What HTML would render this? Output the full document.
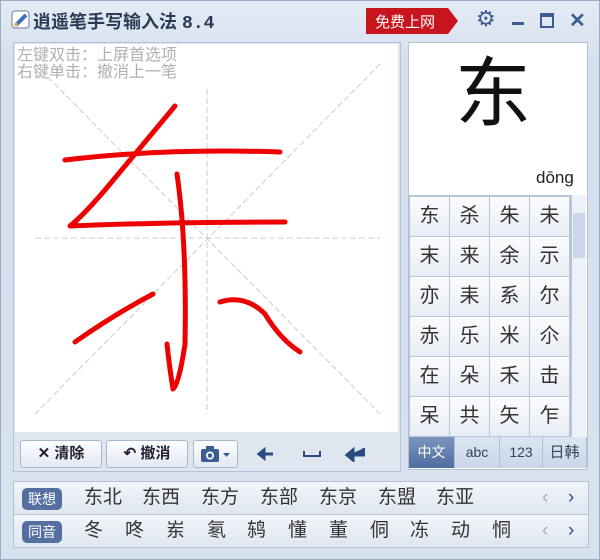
<html><head><style>
body{margin:0;width:600px;height:560px;background:#d3ddeb;font-family:"Liberation Sans","Noto Sans CJK SC",sans-serif;position:relative;overflow:hidden}
.a{position:absolute}
.win{left:0;top:0;width:598px;height:558px;border:1px solid #9aadc8;background:linear-gradient(#e4ebf5,#d6e0ed 60px,#d8e1ee)}
.btn{position:absolute;top:440px;height:26px;border:1px solid #a9b8cc;border-radius:3px;background:linear-gradient(#fdfdfe,#e3e9f2);font-size:15px;line-height:26px;color:#223;text-align:center;font-weight:bold}
.cell{position:absolute;width:39px;height:39px;background:linear-gradient(#fbfcfe,#e8edf4);border-right:1px solid #b7c5d8;border-bottom:1px solid #b7c5d8;font-size:20px;line-height:39px;text-align:center;color:#333}
.tab{position:absolute;top:437px;height:31px;font-size:14px;line-height:31px;text-align:center;color:#345;background:linear-gradient(#dce6f3,#c9d7ea);border-right:1px solid #aebfd6}
.row{position:absolute;left:13px;width:574px;height:32px;background:linear-gradient(#f2f5fa,#dfe6f0);border:1px solid #b3c2d6}
.lab{position:absolute;left:8px;top:6px;width:40px;height:22px;background:#5570a0;color:#fff;border-radius:5px;font-size:14px;line-height:22px;text-align:center}
.w{position:absolute;top:3px;font-size:19px;color:#333;line-height:26px}
</style></head><body>
<div class="a win"></div>
<svg class="a" style="left:11px;top:10px" width="20" height="20"><rect x="1" y="1" width="17" height="17" rx="3" fill="#fff" stroke="#6b7b96"/><path d="M5 15 L15 5" stroke="#3a6fc0" stroke-width="4"/><path d="M4 16 L6 13" stroke="#e8b040" stroke-width="3"/></svg>
<div class="a" style="left:33px;top:8px;font-size:18px;font-weight:bold;color:#2b3a55">逍遥笔手写输入法 <span style="font-family:'Liberation Mono';">8.4</span></div>
<div class="a" style="left:366px;top:8px;width:82px;height:26px;background:#c8141c"></div>
<div class="a" style="left:448px;top:8px;border-left:10px solid #c8141c;border-top:13px solid transparent;border-bottom:13px solid transparent"></div>
<div class="a" style="left:375px;top:11px;color:#fff;font-size:15px">免费上网</div>
<div class="a" style="left:476px;top:6px;font-size:22px;color:#3c5c94">⚙</div>
<div class="a" style="left:512px;top:22px;width:12px;height:3px;background:#3c5c94"></div>
<div class="a" style="left:540px;top:13px;width:10px;height:9px;border:2px solid #3c5c94;border-top-width:4px"></div>
<div class="a" style="left:569px;top:8px;font-size:20px;color:#3c5c94;font-weight:bold">✕</div>
<div class="a" style="left:13px;top:42px;width:386px;height:428px;border:1px solid #b3c2d6;background:#dfe6f0"></div>
<div class="a" style="left:15px;top:44px;width:383px;height:388px;background:#fff"></div>
<svg class="a" style="left:15px;top:44px" width="383" height="388">
<g stroke="#ccc" stroke-dasharray="6,3" fill="none"><path d="M20 194 H365"/><path d="M192 45 V370"/><path d="M20 20 L365 370"/><path d="M365 20 L20 370"/></g>
<g stroke="#ee0000" stroke-width="5" fill="none" stroke-linecap="round" stroke-linejoin="round">
<path d="M50 116 Q150 104 265 108"/>
<path d="M160 62 Q120 110 95 140 Q70 170 55 182 Q150 178 270 178"/>
<path d="M162 130 Q172 200 170 300 Q164 340 158 345 Q154 320 152 300"/>
<path d="M60 298 Q100 270 138 250"/>
<path d="M205 258 Q230 250 250 270 Q265 295 285 308"/>
</g></svg>
<div class="a" style="left:17px;top:47px;font-size:16px;line-height:17px;color:#b0b0b0">左键双击：上屏首选项<br>右键单击：撤消上一笔</div>
<div class="btn" style="left:20px;width:80px">✕ 清除</div>
<div class="btn" style="left:106px;width:80px">↶ 撤消</div>
<div class="btn" style="left:193px;width:43px"><svg width="36" height="20" style="margin-top:3px"><rect x="3" y="5" width="18" height="13" rx="2" fill="#3c5c94"/><rect x="8" y="2" width="8" height="4" fill="#3c5c94"/><circle cx="12" cy="11.5" r="4" fill="#fff"/><circle cx="12" cy="11.5" r="2.3" fill="#3c5c94"/><path d="M25 9 h7 l-3.5 4z" fill="#3c5c94"/></svg></div>
<svg class="a" style="left:255px;top:446px" width="110" height="16"><path d="M4 8 H18 M4 8 l5 -4 v8z" stroke="#2b4a80" stroke-width="3" fill="#2b4a80"/><path d="M49 5 v5 h16 v-5" stroke="#2b4a80" stroke-width="2" fill="none"/><path d="M109 2 v7 H94 M92 9 l6 -5 v10z" stroke="#2b4a80" stroke-width="3" fill="#2b4a80"/></svg>
<div class="a" style="left:408px;top:42px;width:178px;height:426px;border:1px solid #b3c2d6;background:#fff"></div>
<div class="a" style="left:455px;top:50px;font-size:76px;line-height:90px;color:#111">东</div>
<div class="a" style="left:536px;top:168px;font-size:17px;color:#222">dōng</div>
<div class="a" style="left:409px;top:195px;width:163px;height:242px;background:#b7c5d8"></div>
<div class="a" style="left:572px;top:195px;width:14px;height:242px;background:#eef2f8"></div>
<div class="a" style="left:573px;top:213px;width:12px;height:45px;background:#c9d7ea"></div>
<div id="g"></div>
<script>
var c="东杀朱未末来余示杀耒系尔赤乐米尒在朵禾击呆共矢乍".split("");c[8]="亦";var h="";
for(var i=0;i<24;i++){h+='<div class="cell" style="left:'+(410+(i%4)*40)+'px;top:'+(197+Math.floor(i/4)*40)+'px">'+c[i]+'</div>'}
document.getElementById('g').innerHTML=h;
</script>
<div class="tab" style="left:409px;width:45px;background:linear-gradient(#7b95bf,#4f6d9e);color:#fff">中文</div>
<div class="tab" style="left:455px;width:44px">abc</div>
<div class="tab" style="left:500px;width:42px">123</div>
<div class="tab" style="left:543px;width:43px;font-size:15px">日韩</div>
<div class="row" style="top:481px"><div class="lab">联想</div>
<div class="w" style="left:70px">东北</div><div class="w" style="left:128px">东西</div><div class="w" style="left:187px">东方</div><div class="w" style="left:246px">东部</div><div class="w" style="left:305px">东京</div><div class="w" style="left:364px">东盟</div><div class="w" style="left:422px">东亚</div>
<div class="w" style="left:528px;color:#aab">‹</div><div class="w" style="left:554px;color:#2b4a9e">›</div></div>
<div class="row" style="top:514px"><div class="lab">同音</div>
<div class="w" style="left:70px">冬</div><div class="w" style="left:111px">咚</div><div class="w" style="left:152px">岽</div><div class="w" style="left:193px">氡</div><div class="w" style="left:233px">鸫</div><div class="w" style="left:274px">懂</div><div class="w" style="left:315px">董</div><div class="w" style="left:356px">侗</div><div class="w" style="left:396px">冻</div><div class="w" style="left:437px">动</div><div class="w" style="left:478px">恫</div>
<div class="w" style="left:528px;color:#aab">‹</div><div class="w" style="left:554px;color:#2b4a9e">›</div></div>
</body></html>
